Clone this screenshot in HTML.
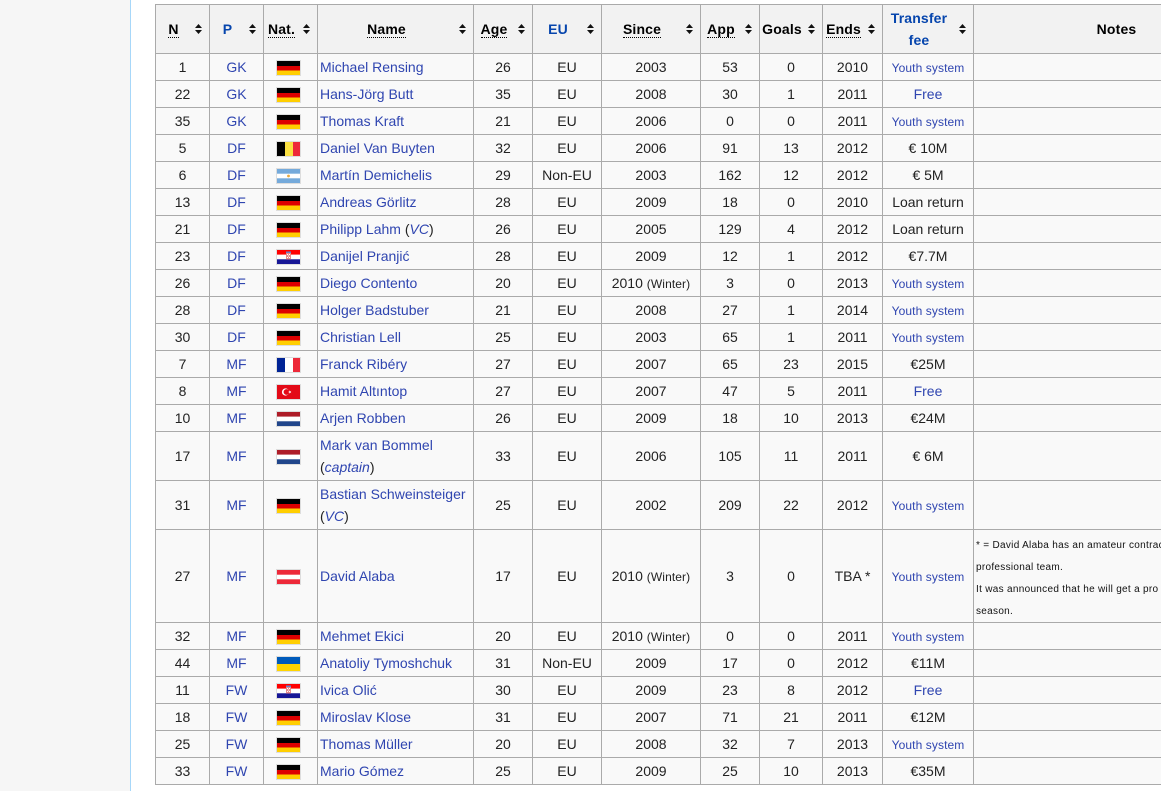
<!DOCTYPE html>
<html>
<head>
<meta charset="utf-8">
<title>Squad</title>
<style>
html,body{margin:0;padding:0;width:1161px;height:791px;overflow:hidden;background:#fff}
body{position:relative;font-family:"Liberation Sans",sans-serif;font-size:14px;color:#222}
#side{position:absolute;left:0;top:0;width:130px;height:791px;background:#f6f6f6;border-right:1px solid #a7d7f9}
table{position:absolute;left:155px;top:4px;border-collapse:collapse;table-layout:fixed;width:1104px;background:#f9f9f9}
th,td{border:1px solid #aaa;padding:0 2px;text-align:center;line-height:22px;white-space:nowrap;overflow:hidden}
th{background:#f2f2f2;position:relative;font-weight:bold;padding-right:20px;color:#000;letter-spacing:.15px}
th.x{padding-right:2px}
tr{height:27px}
tr.h{height:49px}
tr.t{height:49px}
td.n{text-align:left}
a{color:#2f45b0;text-decoration:none}
th a{color:#0645ad}
abbr{border-bottom:1px dotted #000;text-decoration:none}
small{font-size:12px;letter-spacing:.1px}
td.o{font-size:10px;letter-spacing:.3px;text-align:left;line-height:22px;padding-top:4px;color:#111}
td.o span{position:relative;top:1px}
svg.s{position:absolute;right:7px;top:50%;margin-top:-5px;width:7px;height:10px}
svg.f{display:inline-block;vertical-align:middle;width:25px;height:16px;position:relative;left:-2px;top:0}
</style>
</head>
<body>
<div id="side"></div>
<svg width="0" height="0" style="position:absolute">
<defs>
<symbol id="s" viewBox="0 0 7 10"><path d="M3.5 0L7 4H0zM3.5 10L0 6H7z" fill="#111"/></symbol>
<symbol id="de" viewBox="0 0 25 16"><rect width="25" height="16" fill="#ddd"/><rect x="1" y="1" width="23" height="5" fill="#000"/><rect x="1" y="6" width="23" height="4.5" fill="#dd0000"/><rect x="1" y="10.5" width="23" height="4.5" fill="#ffce00"/></symbol>
<symbol id="be" viewBox="0 0 25 16"><rect width="25" height="16" fill="#ddd"/><rect x="1" y="1" width="8" height="14" fill="#000"/><rect x="9" y="1" width="8" height="14" fill="#fae042"/><rect x="17" y="1" width="7" height="14" fill="#ed2939"/></symbol>
<symbol id="ar" viewBox="0 0 25 16"><rect width="25" height="16" fill="#ddd"/><rect x="1" y="1" width="23" height="14" fill="#75aadb"/><rect x="1" y="5.7" width="23" height="4.6" fill="#fff"/><circle cx="12.5" cy="8" r="1.4" fill="#e8a93c"/></symbol>
<symbol id="hr" viewBox="0 0 25 16"><rect width="25" height="16" fill="#ddd"/><rect x="1" y="1" width="23" height="4.7" fill="#f00"/><rect x="1" y="5.7" width="23" height="4.6" fill="#fff"/><rect x="1" y="10.3" width="23" height="4.7" fill="#171796"/><rect x="10" y="3" width="5" height="7.5" fill="#e58a8a"/><rect x="10" y="2.5" width="5" height="1.5" fill="#6a7fc8"/><rect x="11" y="5" width="1" height="1" fill="#fff"/><rect x="13" y="5" width="1" height="1" fill="#fff"/><rect x="12" y="6.5" width="1" height="1" fill="#fff"/><rect x="11" y="8" width="1" height="1" fill="#fff"/><rect x="13" y="8" width="1" height="1" fill="#fff"/></symbol>
<symbol id="fr" viewBox="0 0 25 16"><rect width="25" height="16" fill="#ddd"/><rect x="1" y="1" width="8" height="14" fill="#002395"/><rect x="9" y="1" width="8" height="14" fill="#fff"/><rect x="17" y="1" width="7" height="14" fill="#ed2939"/></symbol>
<symbol id="tr" viewBox="0 0 25 16"><rect width="25" height="16" fill="#ddd"/><rect x="1" y="1" width="23" height="14" fill="#e30a17"/><circle cx="9.5" cy="8" r="3.6" fill="#fff"/><circle cx="10.5" cy="8" r="2.9" fill="#e30a17"/><path d="M12 8l3.3-1.1-2 2.8V6.3l2 2.8z" fill="#fff"/></symbol>
<symbol id="nl" viewBox="0 0 25 16"><rect width="25" height="16" fill="#ddd"/><rect x="1" y="1" width="23" height="4.7" fill="#ae1c28"/><rect x="1" y="5.7" width="23" height="4.6" fill="#fff"/><rect x="1" y="10.3" width="23" height="4.7" fill="#21468b"/></symbol>
<symbol id="at" viewBox="0 0 25 16"><rect width="25" height="16" fill="#ddd"/><rect x="1" y="1" width="23" height="14" fill="#ed2939"/><rect x="1" y="5.7" width="23" height="4.6" fill="#fff"/></symbol>
<symbol id="ua" viewBox="0 0 25 16"><rect width="25" height="16" fill="#ddd"/><rect x="1" y="1" width="23" height="7" fill="#005bbb"/><rect x="1" y="8" width="23" height="7" fill="#ffd500"/></symbol>
</defs>
</svg>
<table>
<colgroup>
<col style="width:54px"><col style="width:54px"><col style="width:54px"><col style="width:156px"><col style="width:59px"><col style="width:69px"><col style="width:99px"><col style="width:59px"><col style="width:63px"><col style="width:60px"><col style="width:91px"><col style="width:286px">
</colgroup>
<tr class="h">
<th><abbr>N</abbr><svg class="s"><use href="#s"/></svg></th>
<th><a>P</a><svg class="s"><use href="#s"/></svg></th>
<th><abbr>Nat.</abbr><svg class="s"><use href="#s"/></svg></th>
<th><abbr>Name</abbr><svg class="s"><use href="#s"/></svg></th>
<th><abbr>Age</abbr><svg class="s"><use href="#s"/></svg></th>
<th><a>EU</a><svg class="s"><use href="#s"/></svg></th>
<th><abbr>Since</abbr><svg class="s"><use href="#s"/></svg></th>
<th><abbr>App</abbr><svg class="s"><use href="#s"/></svg></th>
<th>Goals<svg class="s"><use href="#s"/></svg></th>
<th><abbr>Ends</abbr><svg class="s"><use href="#s"/></svg></th>
<th><a>Transfer<br>fee</a><svg class="s"><use href="#s"/></svg></th>
<th class="x">Notes</th>
</tr>
<tr><td>1</td><td><a>GK</a></td><td><svg class="f"><use href="#de"/></svg></td><td class="n"><a>Michael Rensing</a></td><td>26</td><td>EU</td><td>2003</td><td>53</td><td>0</td><td>2010</td><td><a><small>Youth system</small></a></td><td></td></tr>
<tr><td>22</td><td><a>GK</a></td><td><svg class="f"><use href="#de"/></svg></td><td class="n"><a>Hans-Jörg Butt</a></td><td>35</td><td>EU</td><td>2008</td><td>30</td><td>1</td><td>2011</td><td><a>Free</a></td><td></td></tr>
<tr><td>35</td><td><a>GK</a></td><td><svg class="f"><use href="#de"/></svg></td><td class="n"><a>Thomas Kraft</a></td><td>21</td><td>EU</td><td>2006</td><td>0</td><td>0</td><td>2011</td><td><a><small>Youth system</small></a></td><td></td></tr>
<tr><td>5</td><td><a>DF</a></td><td><svg class="f"><use href="#be"/></svg></td><td class="n"><a>Daniel Van Buyten</a></td><td>32</td><td>EU</td><td>2006</td><td>91</td><td>13</td><td>2012</td><td>€ 10M</td><td></td></tr>
<tr><td>6</td><td><a>DF</a></td><td><svg class="f"><use href="#ar"/></svg></td><td class="n"><a>Martín Demichelis</a></td><td>29</td><td>Non-EU</td><td>2003</td><td>162</td><td>12</td><td>2012</td><td>€ 5M</td><td></td></tr>
<tr><td>13</td><td><a>DF</a></td><td><svg class="f"><use href="#de"/></svg></td><td class="n"><a>Andreas Görlitz</a></td><td>28</td><td>EU</td><td>2009</td><td>18</td><td>0</td><td>2010</td><td>Loan return</td><td></td></tr>
<tr><td>21</td><td><a>DF</a></td><td><svg class="f"><use href="#de"/></svg></td><td class="n"><a>Philipp Lahm</a> (<i><a>VC</a></i>)</td><td>26</td><td>EU</td><td>2005</td><td>129</td><td>4</td><td>2012</td><td>Loan return</td><td></td></tr>
<tr><td>23</td><td><a>DF</a></td><td><svg class="f"><use href="#hr"/></svg></td><td class="n"><a>Danijel Pranjić</a></td><td>28</td><td>EU</td><td>2009</td><td>12</td><td>1</td><td>2012</td><td>€7.7M</td><td></td></tr>
<tr><td>26</td><td><a>DF</a></td><td><svg class="f"><use href="#de"/></svg></td><td class="n"><a>Diego Contento</a></td><td>20</td><td>EU</td><td>2010 <small>(Winter)</small></td><td>3</td><td>0</td><td>2013</td><td><a><small>Youth system</small></a></td><td></td></tr>
<tr><td>28</td><td><a>DF</a></td><td><svg class="f"><use href="#de"/></svg></td><td class="n"><a>Holger Badstuber</a></td><td>21</td><td>EU</td><td>2008</td><td>27</td><td>1</td><td>2014</td><td><a><small>Youth system</small></a></td><td></td></tr>
<tr><td>30</td><td><a>DF</a></td><td><svg class="f"><use href="#de"/></svg></td><td class="n"><a>Christian Lell</a></td><td>25</td><td>EU</td><td>2003</td><td>65</td><td>1</td><td>2011</td><td><a><small>Youth system</small></a></td><td></td></tr>
<tr><td>7</td><td><a>MF</a></td><td><svg class="f"><use href="#fr"/></svg></td><td class="n"><a>Franck Ribéry</a></td><td>27</td><td>EU</td><td>2007</td><td>65</td><td>23</td><td>2015</td><td>€25M</td><td></td></tr>
<tr><td>8</td><td><a>MF</a></td><td><svg class="f"><use href="#tr"/></svg></td><td class="n"><a>Hamit Altıntop</a></td><td>27</td><td>EU</td><td>2007</td><td>47</td><td>5</td><td>2011</td><td><a>Free</a></td><td></td></tr>
<tr><td>10</td><td><a>MF</a></td><td><svg class="f"><use href="#nl"/></svg></td><td class="n"><a>Arjen Robben</a></td><td>26</td><td>EU</td><td>2009</td><td>18</td><td>10</td><td>2013</td><td>€24M</td><td></td></tr>
<tr class="t"><td>17</td><td><a>MF</a></td><td><svg class="f"><use href="#nl"/></svg></td><td class="n"><a>Mark van Bommel</a><br>(<i><a>captain</a></i>)</td><td>33</td><td>EU</td><td>2006</td><td>105</td><td>11</td><td>2011</td><td>€ 6M</td><td></td></tr>
<tr class="t"><td>31</td><td><a>MF</a></td><td><svg class="f"><use href="#de"/></svg></td><td class="n"><a>Bastian Schweinsteiger</a><br>(<i><a>VC</a></i>)</td><td>25</td><td>EU</td><td>2002</td><td>209</td><td>22</td><td>2012</td><td><a><small>Youth system</small></a></td><td></td></tr>
<tr style="height:93px"><td>27</td><td><a>MF</a></td><td><svg class="f"><use href="#at"/></svg></td><td class="n"><a>David Alaba</a></td><td>17</td><td>EU</td><td>2010 <small>(Winter)</small></td><td>3</td><td>0</td><td>TBA *</td><td><a><small>Youth system</small></a></td><td class="o"><span>* = David Alaba has an amateur contract<br>professional team.<br>It was announced that he will get a pro<br>season.</span></td></tr>
<tr><td>32</td><td><a>MF</a></td><td><svg class="f"><use href="#de"/></svg></td><td class="n"><a>Mehmet Ekici</a></td><td>20</td><td>EU</td><td>2010 <small>(Winter)</small></td><td>0</td><td>0</td><td>2011</td><td><a><small>Youth system</small></a></td><td></td></tr>
<tr><td>44</td><td><a>MF</a></td><td><svg class="f"><use href="#ua"/></svg></td><td class="n"><a>Anatoliy Tymoshchuk</a></td><td>31</td><td>Non-EU</td><td>2009</td><td>17</td><td>0</td><td>2012</td><td>€11M</td><td></td></tr>
<tr><td>11</td><td><a>FW</a></td><td><svg class="f"><use href="#hr"/></svg></td><td class="n"><a>Ivica Olić</a></td><td>30</td><td>EU</td><td>2009</td><td>23</td><td>8</td><td>2012</td><td><a>Free</a></td><td></td></tr>
<tr><td>18</td><td><a>FW</a></td><td><svg class="f"><use href="#de"/></svg></td><td class="n"><a>Miroslav Klose</a></td><td>31</td><td>EU</td><td>2007</td><td>71</td><td>21</td><td>2011</td><td>€12M</td><td></td></tr>
<tr><td>25</td><td><a>FW</a></td><td><svg class="f"><use href="#de"/></svg></td><td class="n"><a>Thomas Müller</a></td><td>20</td><td>EU</td><td>2008</td><td>32</td><td>7</td><td>2013</td><td><a><small>Youth system</small></a></td><td></td></tr>
<tr><td>33</td><td><a>FW</a></td><td><svg class="f"><use href="#de"/></svg></td><td class="n"><a>Mario Gómez</a></td><td>25</td><td>EU</td><td>2009</td><td>25</td><td>10</td><td>2013</td><td>€35M</td><td></td></tr>
</table>
</body>
</html>
